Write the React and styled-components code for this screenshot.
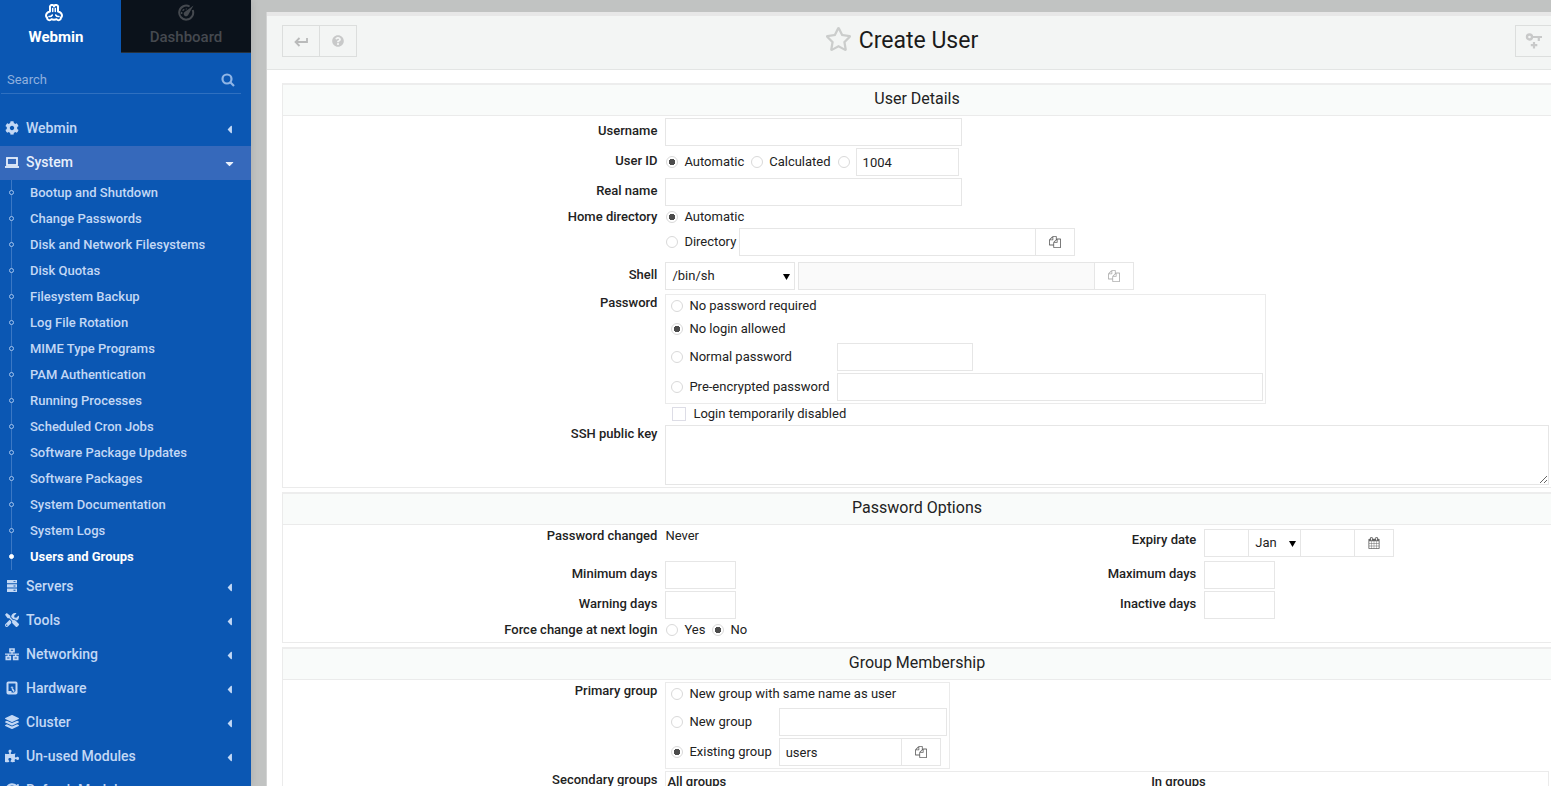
import React from 'react'
import styled, {createGlobalStyle, css} from 'styled-components';
import {
    FaCog, FaTools, FaLayerGroup, FaQuestionCircle,
    FaRegStar, FaPuzzlePiece, FaSyncAlt, FaCaretLeft, FaCaretDown
} from 'react-icons/fa';

const GlobalStyle = createGlobalStyle`
    * {
        box-sizing: border-box;
    }

    body {
        margin: 0;
        background: #c1c3c2;
        color: #222;
        font: 13px/18px Roboto, "Liberation Sans", sans-serif;
    }

    input, select, textarea, button {
        font: inherit;
        color: inherit;
        border-radius: 0;
    }
`;

const Page = styled.div`
    display: flex;
    height: 100vh;
    overflow: hidden;
`;

/* ---------- sidebar ---------- */

const Sidebar = styled.aside`
    flex: 0 0 251px;
    background: #0b57b3;
    color: #c3d8f5;
    box-shadow: 0 0 8px rgba(0, 0, 0, 0.12);
    overflow: hidden;
`;

const Tabs = styled.div`
    display: grid;
    grid-template-columns: 121px 1fr;
    height: 53px;
`;

const Tab = styled.a`
    display: flex;
    flex-direction: column;
    align-items: center;
    gap: 5px;
    padding: 4px 9px 0 0;
    font-size: 15px;
    line-height: 20px;
    font-weight: 500;
    text-decoration: none;
    color: #45494f;

    svg {
        width: 18px;
        height: 18px;
    }

    ${({$active}) => $active ? css`
        color: #fff;
        font-weight: 700;

        svg {
            margin-left: -4px;
        }
    ` : css`
        padding-right: 0;
        background: #0b121b;
        border-bottom: 1px solid #26313d;
    `}
`;

const SearchBox = styled.label`
    display: flex;
    align-items: center;
    margin: 12px 10px 0 1px;
    padding: 1px 6px 0;
    height: 29px;
    border-bottom: 1px solid #2f70c0;
    color: #8fb5e6;

    svg {
        width: 14px;
        height: 14px;
    }
`;

const SearchInput = styled.input`
    flex: 1;
    min-width: 0;
    padding: 0;
    border: 0;
    outline: 0;
    background: transparent;

    &::placeholder {
        color: #8fb0de;
        opacity: 1;
    }
`;

const Menu = styled.nav`
    margin-top: 18px;
`;

const MenuItem = styled.a`
    display: flex;
    align-items: center;
    height: 34px;
    padding: 0 15px 2px 5px;
    font-size: 14px;
    font-weight: 500;
    text-decoration: none;
    color: ${({$open}) => $open ? '#e8f0fc' : '#c3d8f5'};
    background: ${({$open}) => $open ? '#3669bb' : 'transparent'};

    & > svg:first-child {
        flex: none;
        width: 14px;
        height: 14px;
        margin-right: 7px;
    }
`;

const MenuText = styled.span`
    flex: 1;
    white-space: nowrap;
`;

const Caret = styled.span`
    display: flex;
    padding-top: 3px;
    font-size: 13px;
`;

const SubMenu = styled.ul`
    margin: 0;
    padding: 0;
    list-style: none;
    background: linear-gradient(#3b78c5, #3b78c5) 11px 0 / 1px 100% no-repeat;
`;

const SubItem = styled.li`
    display: flex;
    align-items: center;
    height: 26px;
    padding: 0 0 1px 9px;

    &::before {
        content: '';
        box-sizing: border-box;
        width: 5px;
        height: 5px;
        margin-right: 16px;
        border: 1px solid ${({$active}) => $active ? '#fff' : '#a3c3ec'};
        border-radius: 50%;
        background: ${({$active}) => $active ? '#fff' : '#0b57b3'};
    }

    a {
        color: ${({$active}) => $active ? '#fff' : '#c3d8f5'};
        font-weight: ${({$active}) => $active ? 700 : 500};
        text-decoration: none;
        white-space: nowrap;
    }
`;

/* ---------- content ---------- */

const Content = styled.main`
    flex: 1;
    min-width: 0;
    margin: 12px 0 0 15px;
    border-left: 1px solid #d2d3d3;
    background: #fff;
    height: 1000px;
`;

const Header = styled.header`
    display: grid;
    grid-template-columns: 1fr auto 1fr;
    align-items: center;
    padding: 9px 0 12px 15px;
    border-top: 4px solid #e7e7e7;
    border-bottom: 1px solid #e3e5e4;
    background: #f3f5f4;
`;

const ButtonGroup = styled.div`
    display: flex;
    justify-content: ${({$end}) => $end ? 'flex-end' : 'flex-start'};
`;

const HeaderButton = styled.button`
    display: flex;
    align-items: center;
    justify-content: center;
    width: 38px;
    height: 32px;
    padding: 0;
    border: 1px solid #dcdedd;
    background: transparent;
    color: #c8c9c9;

    & + & {
        margin-left: -1px;
    }

    ${({$flush}) => $flush && css`
        width: 36px;
        border-right: 0;
    `}
`;

const Title = styled.h1`
    display: flex;
    align-items: center;
    gap: 7px;
    margin: 0;
    padding-right: 30px;
    font-size: 23px;
    line-height: 30px;
    font-weight: 400;
    color: #1b1b1b;

    svg {
        width: 27px;
        height: 26px;
        margin-top: -4px;
        color: #cbcdcc;
    }
`;

const Sections = styled.form`
    display: flex;
    flex-direction: column;
    gap: 4px;
    padding: 13px 0 0 15px;
`;

const Section = styled.section`
    border: 1px solid #ebebeb;
    border-top: 2px solid #ededed;
    border-right: 0;
`;

const SectionTitle = styled.h2`
    margin: 0;
    padding: 4px 0 6px;
    border-bottom: 1px solid #ebebeb;
    background: #f9fbfa;
    font-size: 16px;
    line-height: 20px;
    font-weight: 400;
    text-align: center;
`;

const SectionBody = styled.div`
    padding: 1px 0;
`;

const Row = styled.div`
    display: grid;
    grid-template-columns: ${({$double}) => $double ? '30% 30% 12.5% 1fr' : '30% 1fr'};
    padding-bottom: ${({$after}) => $after || 0}px;
`;

const Name = styled.div`
    padding: ${({$tall}) => $tall ? 5 : 1}px 6px 0 0;
    font-weight: 500;
    text-align: right;
    white-space: nowrap;
`;

const Value = styled.div`
    min-width: 0;
    padding: 0 2px;
`;

const Line = styled.div`
    display: flex;
    align-items: center;
    min-height: ${({$h}) => $h || 30}px;
    gap: ${({$gap}) => $gap || 0}px;
`;

const Choice = styled.label`
    display: flex;
    align-items: center;
    line-height: 20px;
    white-space: nowrap;
`;

const Radio = styled.input.attrs({type: 'radio'})`
    appearance: none;
    flex: none;
    width: 12px;
    height: 12px;
    margin: 0 6px 0 1px;
    border: 1px solid #d9d9d9;
    border-radius: 50%;
    background: #fff;

    &:checked {
        background: radial-gradient(circle, #4c4c4c 2px, #4c4c4c 3px, #fff 3px);
    }
`;

const Checkbox = styled.input.attrs({type: 'checkbox'})`
    appearance: none;
    width: 14px;
    height: 14px;
    margin: 0 7px;
    border: 1px solid #dddde6;
    background: #fff;
`;

const fieldBorder = css`
    border: 1px solid #e6e6e6;
    background: #fff;
    outline: 0;
`;

const Field = styled.input`
    ${fieldBorder};
    width: ${({$w}) => $w}px;
    height: 28px;
    padding: 0 6px;

    &:disabled {
        background: #fafafa;
    }
`;

const KeyArea = styled.textarea`
    ${fieldBorder};
    display: block;
    width: 100%;
    height: 60px;
    margin: 1px 0;
    resize: vertical;
`;

const SelectWrap = styled.span`
    position: relative;
    display: flex;
    width: ${({$w}) => $w}px;

    svg {
        position: absolute;
        right: 5px;
        top: 12px;
        pointer-events: none;
    }
`;

const Select = styled.select`
    ${fieldBorder};
    appearance: none;
    width: 100%;
    height: 28px;
    padding: 0 6px;
`;

/* inputs with shared borders */
const Joined = styled.div`
    display: flex;

    & > * + * {
        margin-left: -1px;
    }
`;

const FieldButton = styled.button`
    ${fieldBorder};
    display: flex;
    align-items: center;
    justify-content: center;
    width: 40px;
    height: 28px;
    padding: 0;
    color: #666;

    &:disabled {
        color: #b0b0b0;
    }
`;

const OptionBox = styled.div`
    display: inline-grid;
    grid-template-columns: max-content auto;
    column-gap: 7px;
    margin: 1px 0 0;
    padding: 1px 2px 1px 4px;
    border: 1px solid #ebebeb;
    vertical-align: top;
`;

const WideOption = styled.div`
    grid-column: 1 / -1;
    height: 23px;
`;

const GroupsBox = styled.div`
    display: grid;
    grid-template-columns: 55% 1fr;
    min-height: 200px;
    margin-top: 1px;
    padding: 1px;
    border: 1px solid #ebebeb;
    font-weight: 500;
`;

const WebminIcon = () => (
    <svg viewBox="0 0 18 18" fill="none" stroke="currentColor" strokeWidth="2" strokeLinejoin="round" strokeLinecap="round">
        <path d="M5 7.500V3.500a2 2 0 0 1 4-1a2 2 0 0 1 4 1V7.500c2.200.6 4 2.300 4 4.200c0 .9-.5 1.500-1.100 1.700c.2 1.600-.9 2.800-2.300 2.800c-.9 0-1.500-.4-1.900-1c-.8.400-1.700.6-2.700.6s-1.900-.2-2.700-.6c-.4.600-1 1-1.900 1c-1.400 0-2.500-1.200-2.300-2.800C1.500 13.200 1 12.600 1 11.700c0-1.900 1.800-3.600 4-4.200z"/>
        <path d="M7.700 4.500v3M10.300 4.500v3M4 12.500c1.500.2 2.600-.3 3.300-1.500M14 12.500c-1.500.2-2.600-.3-3.300-1.500" strokeWidth="1.500"/>
    </svg>
);

const DashboardIcon = () => (
    <svg viewBox="0 0 18 18" fill="none" stroke="currentColor" strokeWidth="2">
        <path d="M12.600 2.500A7 7 0 1 0 15.700 6"/>
        <path d="M4.600 10a4.500 4.500 0 0 1 5-5" strokeWidth="1.500" strokeDasharray="2 1.500"/>
        <path d="M16.500 1.500L11.200 11a2.400 2.400 0 1 1-3.600-3z" fill="currentColor" stroke="none"/>
    </svg>
);

const SearchIcon = () => (
    <svg viewBox="0 0 14 14" fill="none" stroke="currentColor" strokeWidth="2.200">
        <circle cx="6" cy="6" r="4.500"/>
        <path d="M9.300 9.300L13 13"/>
    </svg>
);

const LaptopIcon = () => (
    <svg viewBox="0 0 14 14" fill="none" stroke="currentColor">
        <rect x="2" y="3" width="10" height="7" strokeWidth="1.800"/>
        <path d="M0 12h14" strokeWidth="1.800"/>
    </svg>
);

const ServersIcon = () => (
    <svg viewBox="0 0 14 14" fill="currentColor">
        <path fillRule="evenodd" d="M2 1h10v3.300H2zM2 5.300h10v3.300H2zM2 9.600h10v3.300H2zM8.500 2.200h2v.9h-2zM8.500 6.500h2v.9h-2zM8.500 10.800h2v.9h-2z"/>
    </svg>
);

const NetworkIcon = () => (
    <svg viewBox="0 0 14 14" fill="none" stroke="currentColor" strokeWidth="1.700">
        <path d="M5 2h4v2.700H5zM1.300 9.700h4v2.700h-4zM8.700 9.700h4v2.700h-4z"/>
        <path d="M7 5v2.200M0 7.200h14M3.300 7v2.500M10.700 7v2.500" strokeWidth="1.300"/>
    </svg>
);

const HardwareIcon = () => (
    <svg viewBox="0 0 14 14" fill="none" stroke="currentColor" strokeWidth="2">
        <rect x="2.500" y="1.500" width="9" height="11" rx=".8"/>
        <path d="M2.500 11h4M11.500 11L9.500 12"/>
        <circle cx="7" cy="6.500" r=".7" strokeWidth="1"/>
        <path d="M7.200 7.500L9 10.500" strokeWidth="1.500"/>
    </svg>
);

const BackIcon = () => (
    <svg width="14" height="12" viewBox="0 0 14 12" fill="none" stroke="currentColor" strokeWidth="1.800">
        <path d="M13 3v4H1.500M5.500 3L1.500 7L5.500 11" stroke="#b9baba"/>
    </svg>
);

const KeyPlusIcon = () => (
    <svg width="18" height="18" viewBox="0 0 18 18" fill="none" stroke="currentColor" strokeWidth="2">
        <circle cx="4.500" cy="5" r="2.500" strokeWidth="2.400"/>
        <path d="M7 5h10M13.800 5v4M9 10v6.500M5.800 13.200h6.500" strokeWidth="2.200"/>
    </svg>
);

const CopyIcon = () => (
    <svg width="12" height="12" viewBox="0 0 1792 1792" fill="currentColor">
        <path d="M1696 384q40 0 68 28t28 68v1216q0 40-28 68t-68 28h-960q-40 0-68-28t-28-68v-288h-544q-40 0-68-28t-28-68v-672q0-40 20-88t48-76l408-408q28-28 76-48t88-20h416q40 0 68 28t28 68v328q68-40 128-40h416zm-544 213l-299 299h299v-299zm-640-384l-299 299h299v-299zm196 647l316-316v-416h-384v416q0 40-28 68t-68 28h-416v640h512v-256q0-40 20-88t48-76zm956 804v-1152h-384v416q0 40-28 68t-68 28h-416v640h896z"/>
    </svg>
);

const CalendarIcon = () => (
    <svg width="12" height="12" viewBox="0 0 1792 1792" fill="currentColor">
        <path d="M192 1664h288v-288h-288v288zm352 0h320v-288h-320v288zm-352-352h288v-320h-288v320zm352 0h320v-320h-320v320zm-352-384h288v-288h-288v288zm736 736h320v-288h-320v288zm-384-736h320v-288h-320v288zm768 736h288v-288h-288v288zm-384-352h320v-320h-320v320zm-352-864v-288q0-13-9.500-22.500t-22.500-9.500h-64q-13 0-22.500 9.500t-9.500 22.500v288q0 13 9.500 22.500t22.500 9.500h64q13 0 22.500-9.500t9.500-22.500zm736 864h288v-320h-288v320zm-384-384h320v-288h-320v288zm384 0h288v-288h-288v288zm32-480v-288q0-13-9.500-22.500t-22.500-9.500h-64q-13 0-22.500 9.500t-9.500 22.500v288q0 13 9.500 22.500t22.500 9.500h64q13 0 22.500-9.500t9.500-22.500zm384-64v1280q0 52-38 90t-90 38h-1408q-52 0-90-38t-38-90v-1280q0-52 38-90t90-38h128v-96q0-66 47-113t113-47h64q66 0 113 47t47 113v96h384v-96q0-66 47-113t113-47h64q66 0 113 47t47 113v96h128q52 0 90 38t38 90z"/>
    </svg>
);

const SelectArrow = () => (
    <svg width="7" height="6" viewBox="0 0 7 6"><path d="M0 0h7L3.500 6z" fill="#000"/></svg>
);

const systemPages = [
    'Bootup and Shutdown', 'Change Passwords', 'Disk and Network Filesystems', 'Disk Quotas',
    'Filesystem Backup', 'Log File Rotation', 'MIME Type Programs', 'PAM Authentication',
    'Running Processes', 'Scheduled Cron Jobs', 'Software Package Updates', 'Software Packages',
    'System Documentation', 'System Logs', 'Users and Groups'
];

const menu = [
    {text: 'Webmin', Icon: FaCog},
    {text: 'System', Icon: LaptopIcon, pages: systemPages},
    {text: 'Servers', Icon: ServersIcon},
    {text: 'Tools', Icon: FaTools},
    {text: 'Networking', Icon: NetworkIcon},
    {text: 'Hardware', Icon: HardwareIcon},
    {text: 'Cluster', Icon: FaLayerGroup},
    {text: 'Un-used Modules', Icon: FaPuzzlePiece},
    {text: 'Refresh Modules', Icon: FaSyncAlt}
];

const RadioOption = ({name, checked, children}) => (
    <Choice><Radio name={name} defaultChecked={checked}/>{children}</Choice>
);

const SideMenu = () => (
    <Sidebar>
        <Tabs>
            <Tab href="#webmin" $active><WebminIcon/>Webmin</Tab>
            <Tab href="#dashboard"><DashboardIcon/>Dashboard</Tab>
        </Tabs>
        <SearchBox>
            <SearchInput placeholder="Search" aria-label="Search"/>
            <SearchIcon/>
        </SearchBox>
        <Menu>
            {menu.map(({text, Icon, pages}) => (
                <React.Fragment key={text}>
                    <MenuItem href="#menu" $open={!!pages}>
                        <Icon/>
                        <MenuText>{text}</MenuText>
                        <Caret>{pages ? <FaCaretDown/> : <FaCaretLeft/>}</Caret>
                    </MenuItem>
                    {pages && <SubMenu>
                        {pages.map(page => (
                            <SubItem key={page} $active={page === 'Users and Groups'}>
                                <a href="#page">{page}</a>
                            </SubItem>
                        ))}
                    </SubMenu>}
                </React.Fragment>
            ))}
        </Menu>
    </Sidebar>
);

const UserDetails = () => (
    <Section>
        <SectionTitle>User Details</SectionTitle>
        <SectionBody>
            <Row>
                <Name as="label" htmlFor="username" $tall>Username</Name>
                <Value><Line><Field id="username" $w={297}/></Line></Value>
            </Row>
            <Row>
                <Name $tall>User ID</Name>
                <Value>
                    <Line $gap={6}>
                        <RadioOption name="uid" checked>Automatic</RadioOption>
                        <RadioOption name="uid">Calculated</RadioOption>
                        <Line>
                            <Radio name="uid" aria-label="Fixed user ID"/>
                            <Field $w={103} defaultValue="1004" aria-label="User ID"/>
                        </Line>
                    </Line>
                </Value>
            </Row>
            <Row>
                <Name as="label" htmlFor="real" $tall>Real name</Name>
                <Value><Line><Field id="real" $w={297}/></Line></Value>
            </Row>
            <Row $after={4}>
                <Name>Home directory</Name>
                <Value>
                    <Line $h={20}><RadioOption name="home" checked>Automatic</RadioOption></Line>
                    <Line $gap={3}>
                        <RadioOption name="home">Directory</RadioOption>
                        <Joined>
                            <Field $w={297} aria-label="Directory"/>
                            <FieldButton type="button" aria-label="Choose directory"><CopyIcon/></FieldButton>
                        </Joined>
                    </Line>
                </Value>
            </Row>
            <Row $after={2}>
                <Name as="label" htmlFor="shell" $tall>Shell</Name>
                <Value>
                    <Line $gap={3}>
                        <SelectWrap $w={130}>
                            <Select id="shell"><option>/bin/sh</option></Select>
                            <SelectArrow/>
                        </SelectWrap>
                        <Joined>
                            <Field $w={297} disabled aria-label="Other shell"/>
                            <FieldButton type="button" disabled aria-label="Choose shell"><CopyIcon/></FieldButton>
                        </Joined>
                    </Line>
                </Value>
            </Row>
            <Row>
                <Name>Password</Name>
                <Value>
                    <OptionBox>
                        <WideOption><RadioOption name="pass">No password required</RadioOption></WideOption>
                        <WideOption><RadioOption name="pass" checked>No login allowed</RadioOption></WideOption>
                        <RadioOption name="pass">Normal password</RadioOption>
                        <Line><Field $w={136} aria-label="Normal password"/></Line>
                        <RadioOption name="pass">Pre-encrypted password</RadioOption>
                        <Line><Field $w={426} aria-label="Pre-encrypted password"/></Line>
                    </OptionBox>
                    <Line $h={20}><Choice><Checkbox/>Login temporarily disabled</Choice></Line>
                </Value>
            </Row>
            <Row>
                <Name as="label" htmlFor="ssh">SSH public key</Name>
                <Value><KeyArea id="ssh"/></Value>
            </Row>
        </SectionBody>
    </Section>
);

const PasswordOptions = () => (
    <Section>
        <SectionTitle>Password Options</SectionTitle>
        <SectionBody>
            <Row $double>
                <Name>Password changed</Name>
                <Value><Line $h={20}>Never</Line></Value>
                <Name $tall>Expiry date</Name>
                <Value>
                    <Line $h={34}>
                        <Joined>
                            <Field $w={45} aria-label="Day"/>
                            <SelectWrap $w={53}>
                                <Select aria-label="Month"><option>Jan</option></Select>
                                <SelectArrow/>
                            </SelectWrap>
                            <Field $w={55} aria-label="Year"/>
                            <FieldButton type="button" aria-label="Calendar"><CalendarIcon/></FieldButton>
                        </Joined>
                    </Line>
                </Value>
            </Row>
            <Row $double>
                <Name as="label" htmlFor="min" $tall>Minimum days</Name>
                <Value><Line><Field id="min" $w={71}/></Line></Value>
                <Name as="label" htmlFor="max" $tall>Maximum days</Name>
                <Value><Line><Field id="max" $w={71}/></Line></Value>
            </Row>
            <Row $double>
                <Name as="label" htmlFor="warn" $tall>Warning days</Name>
                <Value><Line><Field id="warn" $w={71}/></Line></Value>
                <Name as="label" htmlFor="inactive" $tall>Inactive days</Name>
                <Value><Line><Field id="inactive" $w={71}/></Line></Value>
            </Row>
            <Row $double $after={1}>
                <Name>Force change at next login</Name>
                <Value>
                    <Line $h={20} $gap={6}>
                        <RadioOption name="force">Yes</RadioOption>
                        <RadioOption name="force" checked>No</RadioOption>
                    </Line>
                </Value>
            </Row>
        </SectionBody>
    </Section>
);

const GroupMembership = () => (
    <Section>
        <SectionTitle>Group Membership</SectionTitle>
        <SectionBody>
            <Row $after={1}>
                <Name>Primary group</Name>
                <Value>
                    <OptionBox>
                        <WideOption><RadioOption name="group">New group with same name as user</RadioOption></WideOption>
                        <RadioOption name="group">New group</RadioOption>
                        <Line><Field $w={168} aria-label="New group"/></Line>
                        <RadioOption name="group" checked>Existing group</RadioOption>
                        <Line>
                            <Joined>
                                <Field $w={123} defaultValue="users" aria-label="Existing group"/>
                                <FieldButton type="button" aria-label="Choose group"><CopyIcon/></FieldButton>
                            </Joined>
                        </Line>
                    </OptionBox>
                </Value>
            </Row>
            <Row>
                <Name>Secondary groups</Name>
                <Value>
                    <GroupsBox>
                        <span>All groups</span>
                        <span>In groups</span>
                    </GroupsBox>
                </Value>
            </Row>
        </SectionBody>
    </Section>
);

export default function App() {
    return (
        <Page>
            <GlobalStyle/>
            <SideMenu/>
            <Content>
                <Header>
                    <ButtonGroup>
                        <HeaderButton aria-label="Back"><BackIcon/></HeaderButton>
                        <HeaderButton aria-label="Help"><FaQuestionCircle size={12}/></HeaderButton>
                    </ButtonGroup>
                    <Title><FaRegStar/>Create User</Title>
                    <ButtonGroup $end>
                        <HeaderButton $flush aria-label="Add key"><KeyPlusIcon/></HeaderButton>
                    </ButtonGroup>
                </Header>
                <Sections>
                    <UserDetails/>
                    <PasswordOptions/>
                    <GroupMembership/>
                </Sections>
            </Content>
        </Page>
    );
}
